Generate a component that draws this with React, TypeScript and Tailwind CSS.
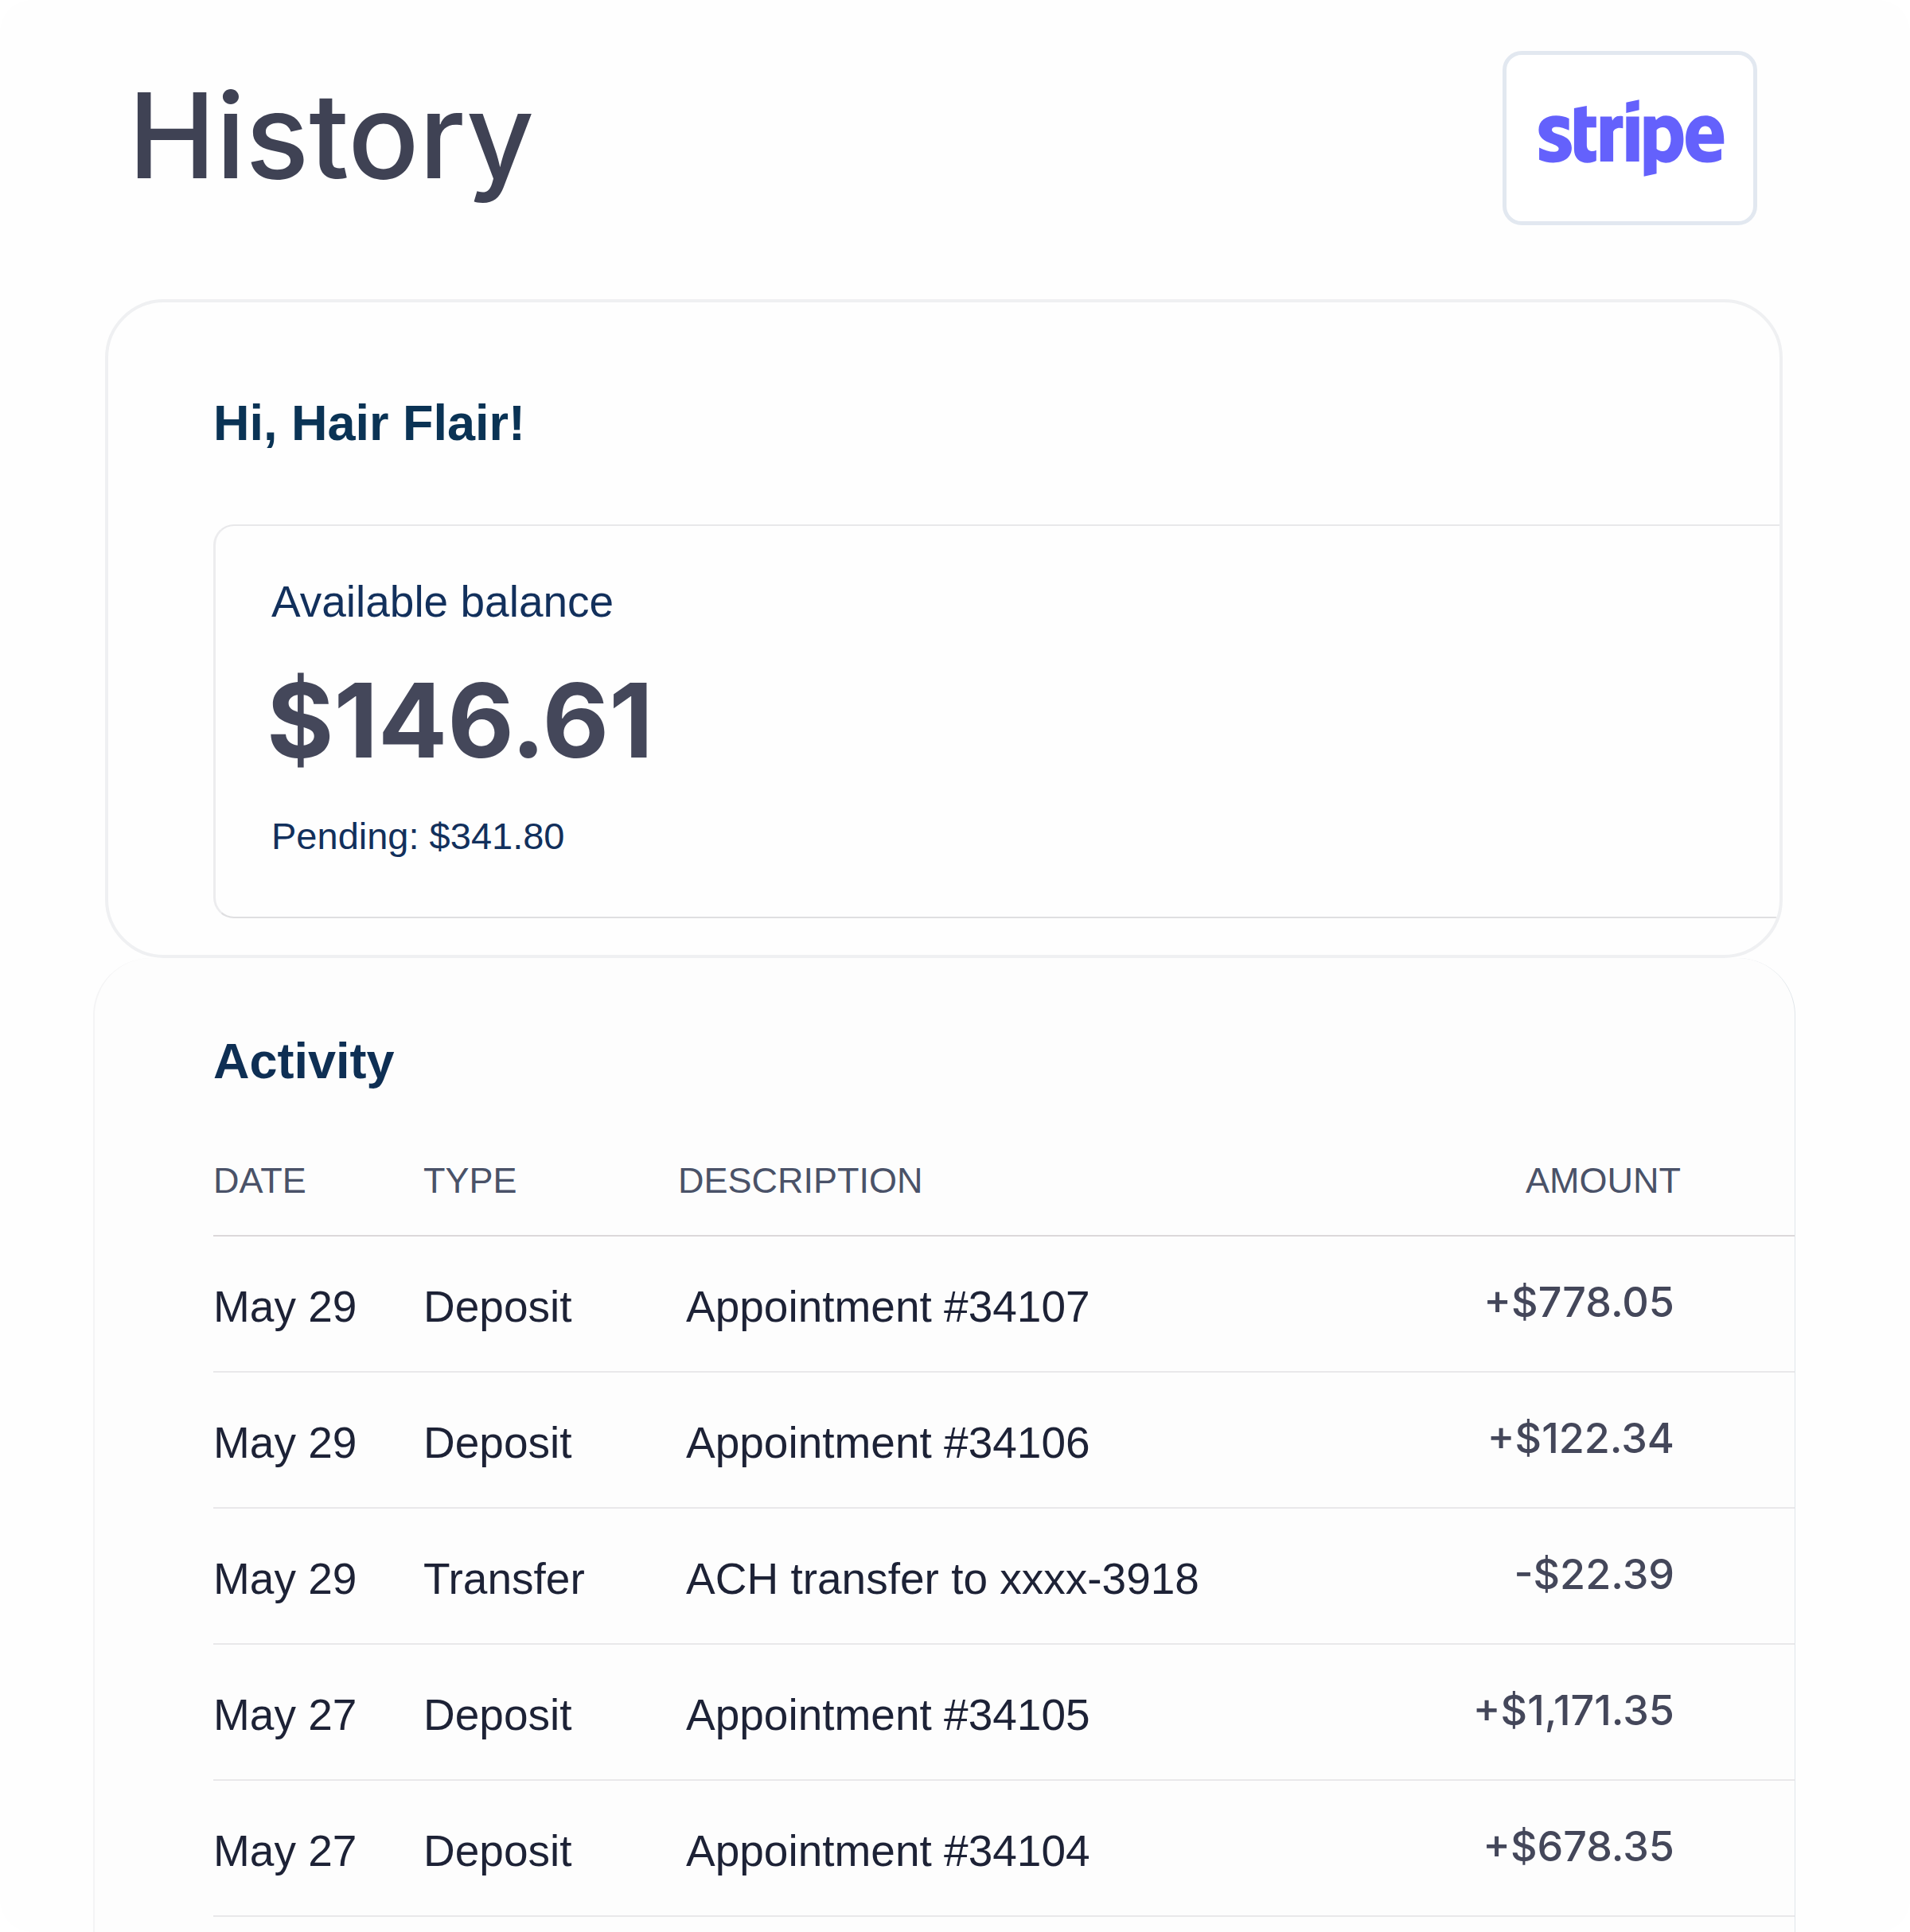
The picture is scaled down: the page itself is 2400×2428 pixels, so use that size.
type Entry = {
  id: string;
  date: string;
  type: string;
  description: string;
  amount: string;
};

const entries: Entry[] = [
  { id: "a", date: "May 29", type: "Deposit", description: "Appointment #34107", amount: "+$778.05" },
  { id: "b", date: "May 29", type: "Deposit", description: "Appointment #34106", amount: "+$122.34" },
  { id: "c", date: "May 29", type: "Transfer", description: "ACH transfer to xxxx-3918", amount: "-$22.39" },
  { id: "d", date: "May 27", type: "Deposit", description: "Appointment #34105", amount: "+$1,171.35" },
  { id: "e", date: "May 27", type: "Deposit", description: "Appointment #34104", amount: "+$678.35" },
];

function StripeLogo() {
  return (
    <svg role="img" aria-label="Stripe" viewBox="190 225 702 292" className="h-[97px] w-[234px]" fill="#6461fc" fillRule="evenodd">
      <path d="M305 297V342C290 335 272 329 256 329C246 329 240 333 240 340C240 362 315 352 315 408C315 445 285 464 245 464C226 464 208 460 192 453V407C209 416 230 423 249 423C260 423 266 419 266 411C266 388 190 395 190 340C190 306 217 286 256 286C273 286 290 290 305 297Z" />
      <path d="M324 258L372 249V290H408V331H372V398C372 420 390 425 408 417V457C400 461 390 465 374 465C345 465 324 446 324 414Z" />
      <path d="M423 290H466L469 305C477 289 492 285 509 289V334C497 331 480 331 472 346V460H423Z" />
      <path d="M521 290H570V460H521ZM521 236L570 226V265L521 276Z" />
      <path d="M588 290H630L634 303C644 292 656 286 672 286C712 286 738 322 738 374C738 430 710 465 671 465C657 465 646 460 636 451V506L588 516ZM636 341V412C641 417 649 421 659 421C678 421 690 402 690 374C690 348 678 330 659 330C649 330 641 334 636 341Z" />
      <path d="M820 286C863 286 891 318 891 377V393H795C797 413 812 423 835 423C852 423 867 419 881 412V452C866 460 848 464 827 464C777 464 746 431 746 377C746 322 776 286 820 286ZM795 357H845C845 338 835 326 820 326C806 326 796 338 795 357Z" />
    </svg>
  );
}

function BalanceCard() {
  return (
    <section className="mr-[160px] ml-[132px] overflow-hidden rounded-[74px] border-4 border-[#eff0f2] bg-[#fefefe] pt-[115px] pb-[46px] pl-[132px]">
      <h2 className="text-[63px] leading-[72px] font-bold text-[#0a3355]">Hi, Hair Flair!</h2>
      <div className="mt-[92px] rounded-l-[26px] border-y-2 border-l-[3px] border-t-[#e8e8ea] border-b-[#dfdfe1] border-l-[#ececee] pt-[63px] pb-[73px] pl-[64px]">
        <p className="pl-1.5 text-[55px] leading-[64px] text-[#12305c]">Available balance</p>
        <p className="mt-[53px] font-['Inter',sans-serif] text-[129px] leading-[128px] font-bold text-[#44475a]">$146.61</p>
        <p className="mt-[54px] pl-1.5 text-[47px] leading-[56px] text-[#12305c]">Pending: $341.80</p>
      </div>
    </section>
  );
}

function ActivityPanel() {
  return (
    <section className="mr-[144px] ml-[117px] flex-1 rounded-t-[72px] border-r border-l-2 border-r-[#e0e6ea] border-l-[#f4f4f5] bg-[#fdfdfd] pt-[93px] pl-[149px]">
      <h2 className="text-[63px] leading-[72px] font-bold text-[#0e2f54]">Activity</h2>
      <table className="mt-[87px] w-full table-fixed border-collapse text-left">
        <thead>
          <tr className="border-b-2 border-[#dcd8da] text-[45px] leading-[56px] text-[#4a5268]">
            <th scope="col" className="w-[264px] pb-10 font-normal">DATE</th>
            <th scope="col" className="w-[320px] pb-10 font-normal">TYPE</th>
            <th scope="col" className="pb-10 font-normal">DESCRIPTION</th>
            <th scope="col" className="w-[500px] pr-[143px] pb-10 text-right font-normal">AMOUNT</th>
          </tr>
        </thead>
        <tbody>
          {entries.map((e) => (
            <tr key={e.id} className="h-[171px] border-b-2 border-[#e9e8ea] align-top text-[55px] leading-[64px] text-[#1d2236]">
              <td className="pt-14">{e.date}</td>
              <td className="pt-14">{e.type}</td>
              <td className="pt-14 pl-2.5">{e.description}</td>
              <td className="pt-[51px] pr-[151px] text-right font-['Inter',sans-serif] text-[52px] font-medium text-[#44475a]">{e.amount}</td>
            </tr>
          ))}
        </tbody>
      </table>
    </section>
  );
}

export default function App() {
  return (
    <main className="flex min-h-screen flex-col rounded-[40px] bg-[#fefefe] font-['Liberation_Sans',Arial,sans-serif]">
      <header className="mb-[93px] flex items-center justify-between pt-16 pr-[192px] pl-[161px]">
        <h1 className="pb-1.5 font-['Inter',sans-serif] text-[148px] leading-[160px] font-medium text-[#3f4254]">History</h1>
        <div className="flex h-[219px] w-[320px] items-center justify-center rounded-[24px] border-[5px] border-[#e2e8f0] bg-white pl-1">
          <StripeLogo />
        </div>
      </header>
      <BalanceCard />
      <ActivityPanel />
    </main>
  );
}
